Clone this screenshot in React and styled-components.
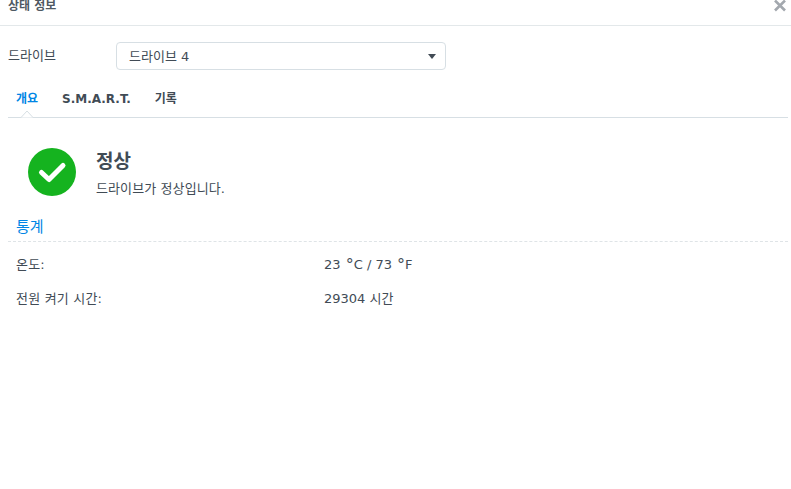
import React from "react";
import styled, { createGlobalStyle } from "styled-components";

const Global = createGlobalStyle`
  html, body { margin: 0; padding: 0; background: #fff; }
  body {
    font-family: "DejaVu Sans", "Noto Sans CJK KR", sans-serif;
    color: #414b55;
    font-size: 13px;
    overflow: hidden;
  }
`;

const Dialog = styled.div`
  width: 791px;
  height: 489px;
  background: #fff;
  display: flex;
  flex-direction: column;
`;

const Header = styled.div`
  height: 25px;
  border-bottom: 1px solid #e3e8ea;
  display: flex;
  justify-content: space-between;
  align-items: flex-start;
  padding: 0 5px 0 8px;
`;

const Title = styled.div`
  font-size: 12px;
  font-weight: 700;
  line-height: 13px;
  color: #4f5963;
`;

const Close = styled.svg`
  width: 12px;
  height: 12px;
`;

const Body = styled.div`
  padding: 16px 3px 0 8px;
  display: flex;
  flex-direction: column;
`;

const DriveRow = styled.div`
  display: flex;
  align-items: center;
  height: 28px;
`;

const DriveLabel = styled.div`
  width: 108px;
  font-size: 13px;
  line-height: 28px;
`;

const Select = styled.div`
  box-sizing: border-box;
  width: 330px;
  height: 28px;
  border: 1px solid #d7dfe4;
  border-radius: 4px;
  display: flex;
  align-items: center;
  justify-content: space-between;
  padding: 0 9px 2px 12px;
  font-size: 13px;
`;

const Caret = styled.span`
  width: 0;
  height: 0;
  margin-top: 2px;
  border-left: 4.5px solid transparent;
  border-right: 4.5px solid transparent;
  border-top: 5px solid #414b55;
`;

const Tabs = styled.div`
  position: relative;
  margin-top: 14px;
  height: 33px;
  border-bottom: 1px solid #d7dfe4;
  display: flex;
  align-items: flex-start;
  gap: 24px;
  padding-left: 8px;
`;

const Tab = styled.div`
  position: relative;
  font-size: 12px;
  font-weight: 700;
  line-height: 31px;
  color: ${(p) => (p.$active ? "#0086e5" : "#414b55")};
`;

const Notch = styled.svg`
  position: absolute;
  left: 3px;
  top: 26px;
  width: 16px;
  height: 8px;
`;

const StatusRow = styled.div`
  display: flex;
  align-items: flex-start;
  padding: 30px 0 0 20px;
`;

const StatusIcon = styled.svg`
  width: 48px;
  height: 48px;
  flex: none;
`;

const StatusText = styled.div`
  margin-left: 20px;
`;

const StatusTitle = styled.div`
  font-size: 19px;
  font-weight: 700;
  line-height: 26px;
`;

const StatusSub = styled.div`
  font-size: 13px;
  line-height: 18px;
  margin-top: 6px;
  letter-spacing: 0.1px;
  color: #414b55;
`;

const Section = styled.div`
  margin-top: 16px;
  height: 27px;
  border-bottom: 1px dashed #dfe4e7;
  padding-left: 8px;
  font-size: 15px;
  line-height: 26px;
  color: #0086e5;
`;

const Stats = styled.div`
  padding: 6px 0 0 8px;
`;

const StatRow = styled.div`
  display: flex;
  height: 34px;
  align-items: center;
  font-size: 13px;
  line-height: 18px;
`;

const StatLabel = styled.div`
  width: 308px;
  letter-spacing: 0.2px;
`;

const Degree = styled.span`
  font-size: 16px;
  line-height: 0;
  letter-spacing: 1px;
  padding-left: 1px;
  margin-right: -1px;
  vertical-align: -1px;
`;

const stats = [
  {
    label: "온도:",
    value: (
      <>
        23 <Degree>°</Degree>C / 73 <Degree>°</Degree>F
      </>
    ),
  },
  { label: "전원 켜기 시간:", value: "29304 시간" },
];

export default function App() {
  return (
    <Dialog>
      <Global />
      <Header>
        <Title>상태 정보</Title>
        <Close viewBox="0 0 12 12">
          <path d="M1 0.5 L11 10.5 M11 0.5 L1 10.5" stroke="#a3a8ae" strokeWidth="2.6" fill="none" />
        </Close>
      </Header>
      <Body>
        <DriveRow>
          <DriveLabel>드라이브</DriveLabel>
          <Select>
            <span>드라이브 4</span>
            <Caret />
          </Select>
        </DriveRow>
        <Tabs>
          <Tab $active>
            개요
            <Notch viewBox="0 0 16 8">
              <path d="M0 7.5 H2 L8 1 L14 7.5 H16" fill="#fff" stroke="#d7dfe4" strokeWidth="1" />
            </Notch>
          </Tab>
          <Tab>S.M.A.R.T.</Tab>
          <Tab>기록</Tab>
        </Tabs>
        <StatusRow>
          <StatusIcon viewBox="0 0 48 48">
            <circle cx="24" cy="24" r="24" fill="#15b31f" />
            <path d="M13.5 24.5 L21 31.5 L35 17.5" fill="none" stroke="#fff" strokeWidth="5" strokeLinecap="round" strokeLinejoin="round" />
          </StatusIcon>
          <StatusText>
            <StatusTitle>정상</StatusTitle>
            <StatusSub>드라이브가 정상입니다.</StatusSub>
          </StatusText>
        </StatusRow>
        <Section>통계</Section>
        <Stats>
          {stats.map((s) => (
            <StatRow key={s.label}>
              <StatLabel>{s.label}</StatLabel>
              <div>{s.value}</div>
            </StatRow>
          ))}
        </Stats>
      </Body>
    </Dialog>
  );
}
